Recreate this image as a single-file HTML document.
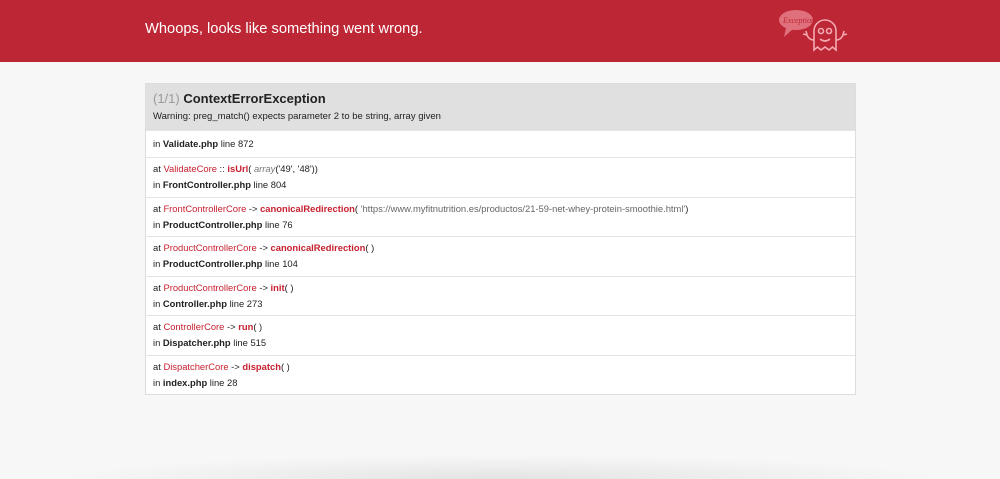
<!DOCTYPE html>
<html><head><style>
html,body{margin:0;width:1000px;height:479px;overflow:hidden}
body{background:#f7f7f7;font-family:"Liberation Sans",Arial,sans-serif;position:relative;color:#222}
.hd{height:62px;background:#bd2634;position:relative}
.hd h1{margin:0;position:absolute;left:145px;top:21px;font-size:14.7px;font-weight:normal;color:#fff}
.box{position:absolute;left:145px;top:83px;width:709px;border:1px solid #ddd;background:#fff}
.top{background:#e0e0e0;height:46px;box-sizing:border-box;padding:7px 7px 0}
.top .t{font-size:13px;font-weight:bold}
.top .t span{color:#999;font-weight:normal}
.top .m{font-size:9.5px;margin-top:5px}
.r{border-top:1px solid #e4e4e4;padding:0 7px;font-size:9.4px;box-sizing:border-box;height:39.5px;padding-top:3px;line-height:16px}
.r.f{height:27px;padding-top:5px}
.red{color:#c8202f}
.b{font-weight:bold}
.g{color:#666}
.i{font-style:italic;color:#777}
.shadow{position:absolute;left:60px;right:60px;top:455px;height:24px;background:radial-gradient(ellipse 50% 100% at 50% 100%,rgba(0,0,0,.08),rgba(0,0,0,0))}
</style></head><body>
<div class="hd"><h1>Whoops, looks like something went wrong.</h1>
<svg style="position:absolute;left:776px;top:6px" width="82" height="48" viewBox="0 0 82 48" fill="none" stroke="#f3a9b1" stroke-width="1.6">
<ellipse cx="20" cy="14" rx="17" ry="10" fill="#e0707c" stroke="none"/>
<path d="M10 22 L8 31 L17 23" fill="#e0707c" stroke="none"/>
<text x="7" y="17" font-size="8" font-style="italic" fill="#bd2634" stroke="none" font-family="Liberation Serif">Exception!</text>
<path d="M38 44 V25 a11 11 0 0 1 22 0 V44 l-3.5 -3 -3.5 3 -4 -3 -4 3 -3.5 -3 -3.5 3z"/>
<circle cx="45" cy="25" r="2.5"/><circle cx="53" cy="25" r="2.5"/>
<path d="M44 33 q5 4 10 0"/>
<path d="M38 34 q-5 0 -7 -5 M31 29 l-1 -4 M31 29 l-4 -1"/>
<path d="M60 34 q5 0 7 -5 M67 29 l1 -4 M67 29 l4 -1"/>
</svg></div>
<div class="box">
<div class="top"><div class="t"><span>(1/1)</span> ContextErrorException</div><div class="m">Warning: preg_match() expects parameter 2 to be string, array given</div></div>
<div class="r f">in <b>Validate.php</b> line 872</div>
<div class="r">at <span class="red">ValidateCore</span> :: <span class="red b">isUrl</span>( <span class="i">array</span>('49', '48'))<br>in <b>FrontController.php</b> line 804</div>
<div class="r">at <span class="red">FrontControllerCore</span> -&gt; <span class="red b">canonicalRedirection</span>( <span class="g">'https://www.myfitnutrition.es/productos/21-59-net-whey-protein-smoothie.html'</span>)<br>in <b>ProductController.php</b> line 76</div>
<div class="r">at <span class="red">ProductControllerCore</span> -&gt; <span class="red b">canonicalRedirection</span>( )<br>in <b>ProductController.php</b> line 104</div>
<div class="r">at <span class="red">ProductControllerCore</span> -&gt; <span class="red b">init</span>( )<br>in <b>Controller.php</b> line 273</div>
<div class="r">at <span class="red">ControllerCore</span> -&gt; <span class="red b">run</span>( )<br>in <b>Dispatcher.php</b> line 515</div>
<div class="r">at <span class="red">DispatcherCore</span> -&gt; <span class="red b">dispatch</span>( )<br>in <b>index.php</b> line 28</div>
</div>
<div class="shadow"></div>
</body></html>
